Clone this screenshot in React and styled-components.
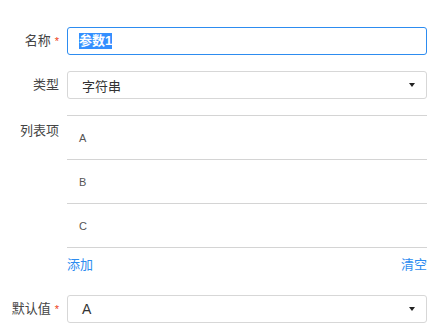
import React from 'react';
import styled, { createGlobalStyle } from 'styled-components';

const GlobalStyle = createGlobalStyle`
  body {
    margin: 0;
    background: #fff;
    font-family: "Liberation Sans", "Noto Sans CJK SC", sans-serif;
    color: #444;
  }
`;

const Form = styled.div`
  width: 438px;
  box-sizing: border-box;
  padding: 27px 11px 0 0;
`;

const Row = styled.div`
  display: flex;
  align-items: flex-start;
  margin-bottom: ${(p) => (p.$tight ? 0 : 16)}px;
`;

const Label = styled.div`
  flex: 0 0 67px;
  box-sizing: border-box;
  padding: ${(p) => p.$top || 0}px 8px 0 0;
  text-align: right;
  font-size: 13px;
  line-height: 28px;
  color: #444;
  white-space: nowrap;
`;

const Star = styled.span`
  color: #ed4014;
  font-size: 11px;
  margin-left: 4px;
`;

const Control = styled.div`
  flex: 1;
  min-width: 0;
`;

const Box = styled.div`
  height: 28px;
  box-sizing: border-box;
  border: 1px solid ${(p) => (p.$focus ? '#2d8cf0' : '#d7d7d7')};
  border-radius: 3px;
  display: flex;
  align-items: center;
  padding: 0 11px 0 ${(p) => p.$pad || 10}px;
  font-size: ${(p) => p.$size || 13}px;
  color: #333;
  background: #fff;
`;

const Selected = styled.span`
  background: #338fff;
  color: #fff;
  line-height: 16px;
  font-weight: bold;
`;

const Value = styled.span`
  flex: 1;
`;

const Caret = styled.span`
  width: 0;
  height: 0;
  border-left: 3px solid transparent;
  border-right: 3px solid transparent;
  border-top: 4px solid #222;
`;

const List = styled.div`
  border-top: 1px solid #d4d4d4;
`;

const Item = styled.div`
  height: 44px;
  box-sizing: border-box;
  border-bottom: 1px solid #d4d4d4;
  display: flex;
  align-items: center;
  padding-left: 12px;
  font-size: 11px;
  color: #555;
`;

const Links = styled.div`
  display: flex;
  justify-content: space-between;
  height: 31px;
  align-items: center;
  margin-bottom: 16px;
`;

const Link = styled.a`
  font-size: 13px;
  color: #2d8cf0;
  cursor: pointer;
`;

const Select = ({ value, pad, size }) => (
  <Box $pad={pad} $size={size}>
    <Value>{value}</Value>
    <Caret />
  </Box>
);

export default function App() {
  const items = ['A', 'B', 'C'];
  return (
    <>
      <GlobalStyle />
      <Form>
        <Row>
          <Label>名称<Star>*</Star></Label>
          <Control>
            <Box $focus $pad={11}>
              <Selected>参数1</Selected>
            </Box>
          </Control>
        </Row>
        <Row>
          <Label>类型</Label>
          <Control>
            <Select value="字符串" pad={14} />
          </Control>
        </Row>
        <Row $tight>
          <Label $top={2}>列表项</Label>
          <Control>
            <List>
              {items.map((it) => (
                <Item key={it}>{it}</Item>
              ))}
            </List>
            <Links>
              <Link>添加</Link>
              <Link>清空</Link>
            </Links>
          </Control>
        </Row>
        <Row>
          <Label>默认值<Star>*</Star></Label>
          <Control>
            <Select value="A" pad={14} size={14} />
          </Control>
        </Row>
      </Form>
    </>
  );
}
